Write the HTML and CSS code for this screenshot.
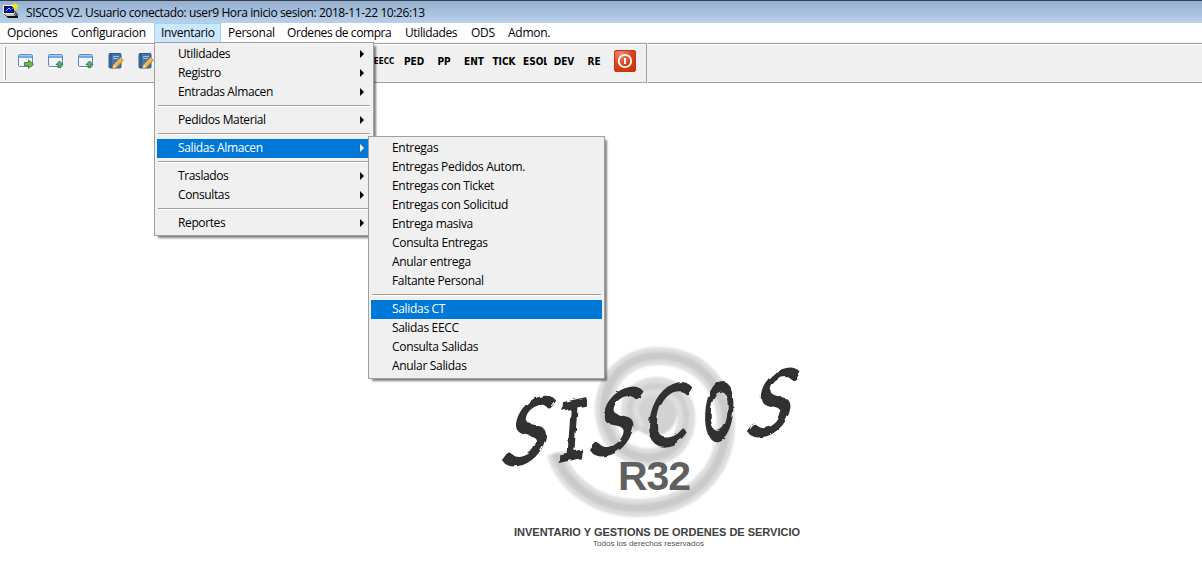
FILE: index.html
```html
<!DOCTYPE html>
<html lang="es">
<head>
<meta charset="utf-8">
<title>SISCOS V2</title>
<link rel="stylesheet" href="styles.css">
</head>
<body>
<svg class="defs" width="0" height="0">
  <defs>
    <linearGradient id="gold" x1="0" y1="0" x2="1" y2="1"><stop offset="0" stop-color="#ffe08a"/><stop offset="1" stop-color="#d98a1c"/></linearGradient>
    <linearGradient id="win" x1="0" y1="0" x2="1" y2="1"><stop offset="0" stop-color="#fff"/><stop offset="1" stop-color="#dfeaf6"/></linearGradient>
    <symbol id="window" viewBox="0 0 16 16"><rect width="16" height="16" fill="#fafafa"/><rect x=".5" y="1.5" width="14" height="12" rx="1" fill="url(#win)" stroke="#5688c8"/><path d="M1 2h13v3H1z" fill="#77a8e4"/><path d="M1 2.5h13" stroke="#a9cbf3"/></symbol>
    <symbol id="up" viewBox="0 0 16 16"><use href="#window"/><path d="M11.500 8l3.500 3.700h-2v3h-3v-3H8z" fill="#5dac67" stroke="#2f7d43" stroke-width=".9"/></symbol>
    <symbol id="right" viewBox="0 0 16 16"><use href="#window"/><path d="M6.500 9.500h4v-2.500l5 4.200-5 4.200v-2.500h-4z" fill="#72b84d" stroke="#3f7f2c" stroke-width=".9"/></symbol>
    <symbol id="edit" viewBox="0 0 16 16"><rect width="16" height="16" fill="#f7f7f7"/><rect x="1" y=".5" width="12" height="14.500" rx="1" fill="#4676aa" stroke="#29568b"/><path d="M3 1v14" stroke="#244c7d"/><path d="M5 3.500h6M5 5.500h5" stroke="#9fc4e8"/><path d="M12.500 4.500l3 2.500-7 7.500-4 1.300.8-4z" fill="url(#gold)" stroke="#b87922" stroke-width=".7"/><path d="M6 12l2 2-3.300 1.500z" fill="#f6e1bc"/></symbol>
  </defs>
</svg>
<header class="titlebar">
  <svg class="app-icon" width="16" height="16" viewBox="0 0 16 16"><path d="M0 2h11v9H0z" fill="#f4f4f4"/><path d="M1 3h10v7H1z" fill="#111"/><path d="M2 4h8v5H2z" fill="#0010d8"/><path d="M3 8l3-3 2 2" stroke="#8de" fill="none"/><path d="M1 11h10l4 2v2H5z" fill="#111"/><path d="M1 11h9l3 2H4z" fill="#c8c8c8"/><path d="M11 7l4 4v2l-3-2z" fill="#555"/><path d="M12 0v7M9 3.500h7M9.500 1l5 5M14.500 1l-5 5" stroke="#fff200"/><circle cx="12" cy="3.500" r="2" fill="#fff200"/></svg>
  <span>SISCOS V2. Usuario conectado: user9 Hora inicio sesion: 2018-11-22 10:26:13</span>
</header>
<nav class="menubar">
  <span class="m-opciones">Opciones</span><span class="m-config">Configuracion</span>
  <div class="open m-inv">Inventario
    <div class="menu main-menu">
      <div class="item sub">Utilidades</div>
      <div class="item sub">Registro</div>
      <div class="item sub">Entradas Almacen</div>
      <hr>
      <div class="item sub">Pedidos Material</div>
      <hr>
      <div class="item sub active">Salidas Almacen</div>
      <hr>
      <div class="item sub">Traslados</div>
      <div class="item sub">Consultas</div>
      <hr>
      <div class="item sub">Reportes</div>
      <div class="menu submenu">
        <div class="item">Entregas</div>
        <div class="item">Entregas Pedidos Autom.</div>
        <div class="item">Entregas con Ticket</div>
        <div class="item">Entregas con Solicitud</div>
        <div class="item">Entrega masiva</div>
        <div class="item">Consulta Entregas</div>
        <div class="item">Anular entrega</div>
        <div class="item">Faltante Personal</div>
        <hr>
        <div class="item active">Salidas CT</div>
        <div class="item">Salidas EECC</div>
        <div class="item">Consulta Salidas</div>
        <div class="item">Anular Salidas</div>
      </div>
    </div>
  </div>
  <span class="m-pers">Personal</span><span class="m-ord">Ordenes de compra</span><span class="m-util">Utilidades</span><span class="m-ods">ODS</span><span class="m-adm">Admon.</span>
</nav>
<div class="toolbar">
  <div class="band">
    <i class="grip"></i>
    <div class="icons">
      <svg><use href="#right"/></svg><svg><use href="#up"/></svg><svg><use href="#up"/></svg><svg><use href="#edit"/></svg><svg><use href="#edit"/></svg>
    </div>
    <div class="labels"><b class="small">EECC</b><b>PED</b><b>PP</b><b>ENT</b><b>TICK</b><b class="clip">ESOL</b><b>DEV</b><b>RE</b></div>
    <svg class="power" width="22" height="22" viewBox="0 0 22 22"><defs><radialGradient id="red" cx=".3" cy=".15" r="1"><stop offset="0" stop-color="#f08a6c"/><stop offset=".55" stop-color="#dc4320"/><stop offset="1" stop-color="#c93405"/></radialGradient></defs><rect x=".5" y=".5" width="21" height="21" rx="1.500" fill="url(#red)" stroke="#b93a1b"/><circle cx="11" cy="11" r="6.200" fill="none" stroke="#fff" stroke-width="1.800"/><path d="M11 8v6" stroke="#fff" stroke-width="2"/></svg>
  </div>
  <div class="band rest"></div>
</div>
<main class="workspace">
  <svg class="logo" width="330" height="230" viewBox="490 330 330 230">
    <defs>
      <filter id="soft" x="-10%" y="-10%" width="120%" height="120%"><feGaussianBlur stdDeviation="1.300"/></filter>
      <filter id="brush" x="-5%" y="-5%" width="110%" height="110%"><feTurbulence type="fractalNoise" baseFrequency=".09" numOctaves="2" seed="4"/><feDisplacementMap in="SourceGraphic" scale="4"/></filter>
    </defs>
    <g fill="none" filter="url(#soft)">
      <circle cx="654" cy="413" r="23" fill="#d2d2d2"/>
      <path d="M638 430C621 407 633 386 657 386C682 387 691 411 684 432C673 464 632 464 615 442C591 411 607 356 658 356C703 356 726 391 726 423C726 473 690 508 637 508C594 508 563 481 556 453" stroke="#dedede" stroke-width="18"/>
      <path d="M684 432C673 464 632 464 615 442C591 411 607 356 658 356C703 356 726 391 726 423C726 473 690 508 637 508C594 508 563 481 556 453" stroke="#cacaca" stroke-width="8"/>
      <path d="M638 430C621 407 633 386 657 386C682 387 691 411 684 432" stroke="#cfcfcf" stroke-width="6"/>
    </g>
    <g class="brush" filter="url(#brush)">
      <text transform="translate(498 468) rotate(-10) skewX(-27) scale(.95 1)" font-size="86">S</text>
      <text class="mono" transform="translate(554 463) rotate(-12) skewX(-16) scale(.72 1)" font-size="78">I</text>
      <text transform="translate(586 458) rotate(-10) skewX(-27) scale(.95 1)" font-size="85">S</text>
      <text transform="translate(643 450) rotate(-12) skewX(-20) scale(.82 1)" font-size="80">C</text>
      <text transform="translate(703 441) rotate(-9) skewX(-12) scale(.5 1)" font-size="75" stroke-width="4">O</text>
      <text transform="translate(743 439) rotate(-10) skewX(-27) scale(.95 1)" font-size="85">S</text>
    </g>
    <text class="release" x="618" y="490" textLength="73">R32</text>
    <text class="tagline" x="514" y="536" textLength="286">INVENTARIO Y GESTIONS DE ORDENES DE SERVICIO</text>
    <text class="rights" x="593" y="546" textLength="111">Todos los derechos reservados</text>
  </svg>
</main>
</body>
</html>
```
FILE: styles.css
```css
* { box-sizing: border-box; }
body { margin: 0; height: 571px; overflow: hidden; background: #fff; color: #000; font: 12px/19px "Open Sans", "Noto Sans", sans-serif; white-space: nowrap; }
.defs { position: absolute; }
.titlebar { height: 23px; display: flex; align-items: center; gap: 7px; padding: 0 0 0 3px; border-top: 1px solid #383c44; background: linear-gradient(#94afcf, #b8d0ea); }
.titlebar span { letter-spacing: -.39px; }
.app-icon { align-self: flex-start; margin-top: 2px; }
.menubar { display: flex; height: 19px; padding-left: 7px; letter-spacing: -.25px; }
.menubar > span { flex: none; }
.m-opciones { width: 64px; }
.m-config { width: 83px; }
.m-inv { width: 67px; letter-spacing: -.32px; }
.m-pers { width: 66px; padding-left: 7px; }
.m-ord { width: 118px; letter-spacing: -.42px; }
.m-util { width: 66px; letter-spacing: -.38px; }
.m-ods { width: 37px; }
.open { position: relative; height: 19px; padding-left: 6px; background: #cce8ff; border: 1px solid #99d1ff; line-height: 18px; border-bottom: 0; }
.menu { position: absolute; background: #f0f0f0; border: 1px solid #a0a0a0; padding: 2px; box-shadow: 3px 3px 2px -1px rgba(0,0,0,.5); line-height: 18px; }
.main-menu { z-index: 5; left: -1px; top: 18px; width: 220px; height: 194px; }
.submenu { left: 213px; top: 93px; width: 237px; height: 243px; }
.item { height: 19px; padding-left: 21px; }
.active { background: #0078d7; color: #fff; }
.sub { display: flex; align-items: center; justify-content: space-between; padding: 0 7px 2px 21px; letter-spacing: -.38px; }
.sub::after { content: ""; border: 4px solid transparent; border-left: 4px solid currentColor; border-right: 0; }
hr { height: 2px; border: 0; border-top: 1px solid #a0a0a0; background: #fff; margin: 3px 1px 4px; }
.toolbar { display: flex; gap: 1px; height: 41px; padding-top: 1px; background: #f0f0f0; }
.band { display: flex; align-items: flex-start; width: 647px; height: 40px; border: 1px solid #a0a0a0; border-left: 0; box-shadow: inset 0 1px #fff; }
.rest { flex: 1; border-right: 0; }
.grip { width: 3px; height: 33px; margin: 3px 0 0 3px; background: #fafafa; border-right: 1px solid #a0a0a0; }
.icons { display: flex; gap: 14px; padding: 9px 0 0 12px; width: 363px; }
.icons svg { width: 16px; height: 16px; flex: none; }
.labels { display: flex; padding-top: 8px; font: bold 10px/20px "DejaVu Sans Condensed", "DejaVu Sans", sans-serif; font-stretch: condensed; }
.labels b { width: 30px; text-align: center; }
.labels .small { font-size: 8px; }
.labels .clip { width: 24px; margin: 0 2px 0 4px; overflow: hidden; text-align: left; }
.power { margin: 6px 0 0 5px; }
.workspace { padding: 247px 0 0 490px; }
.logo { display: block; }
.brush { fill: #303030; stroke: #303030; stroke-width: 1.800; font-family: Lato, sans-serif; font-weight: 400; }
.brush .mono { font-family: "DejaVu Sans Mono", monospace; }
.release { font: bold 41px "Liberation Sans", sans-serif; fill: #606060; }
.tagline { font: bold 11px "Liberation Sans", sans-serif; fill: #404040; }
.rights { font: 8px "Liberation Sans", sans-serif; fill: #505050; }
```
